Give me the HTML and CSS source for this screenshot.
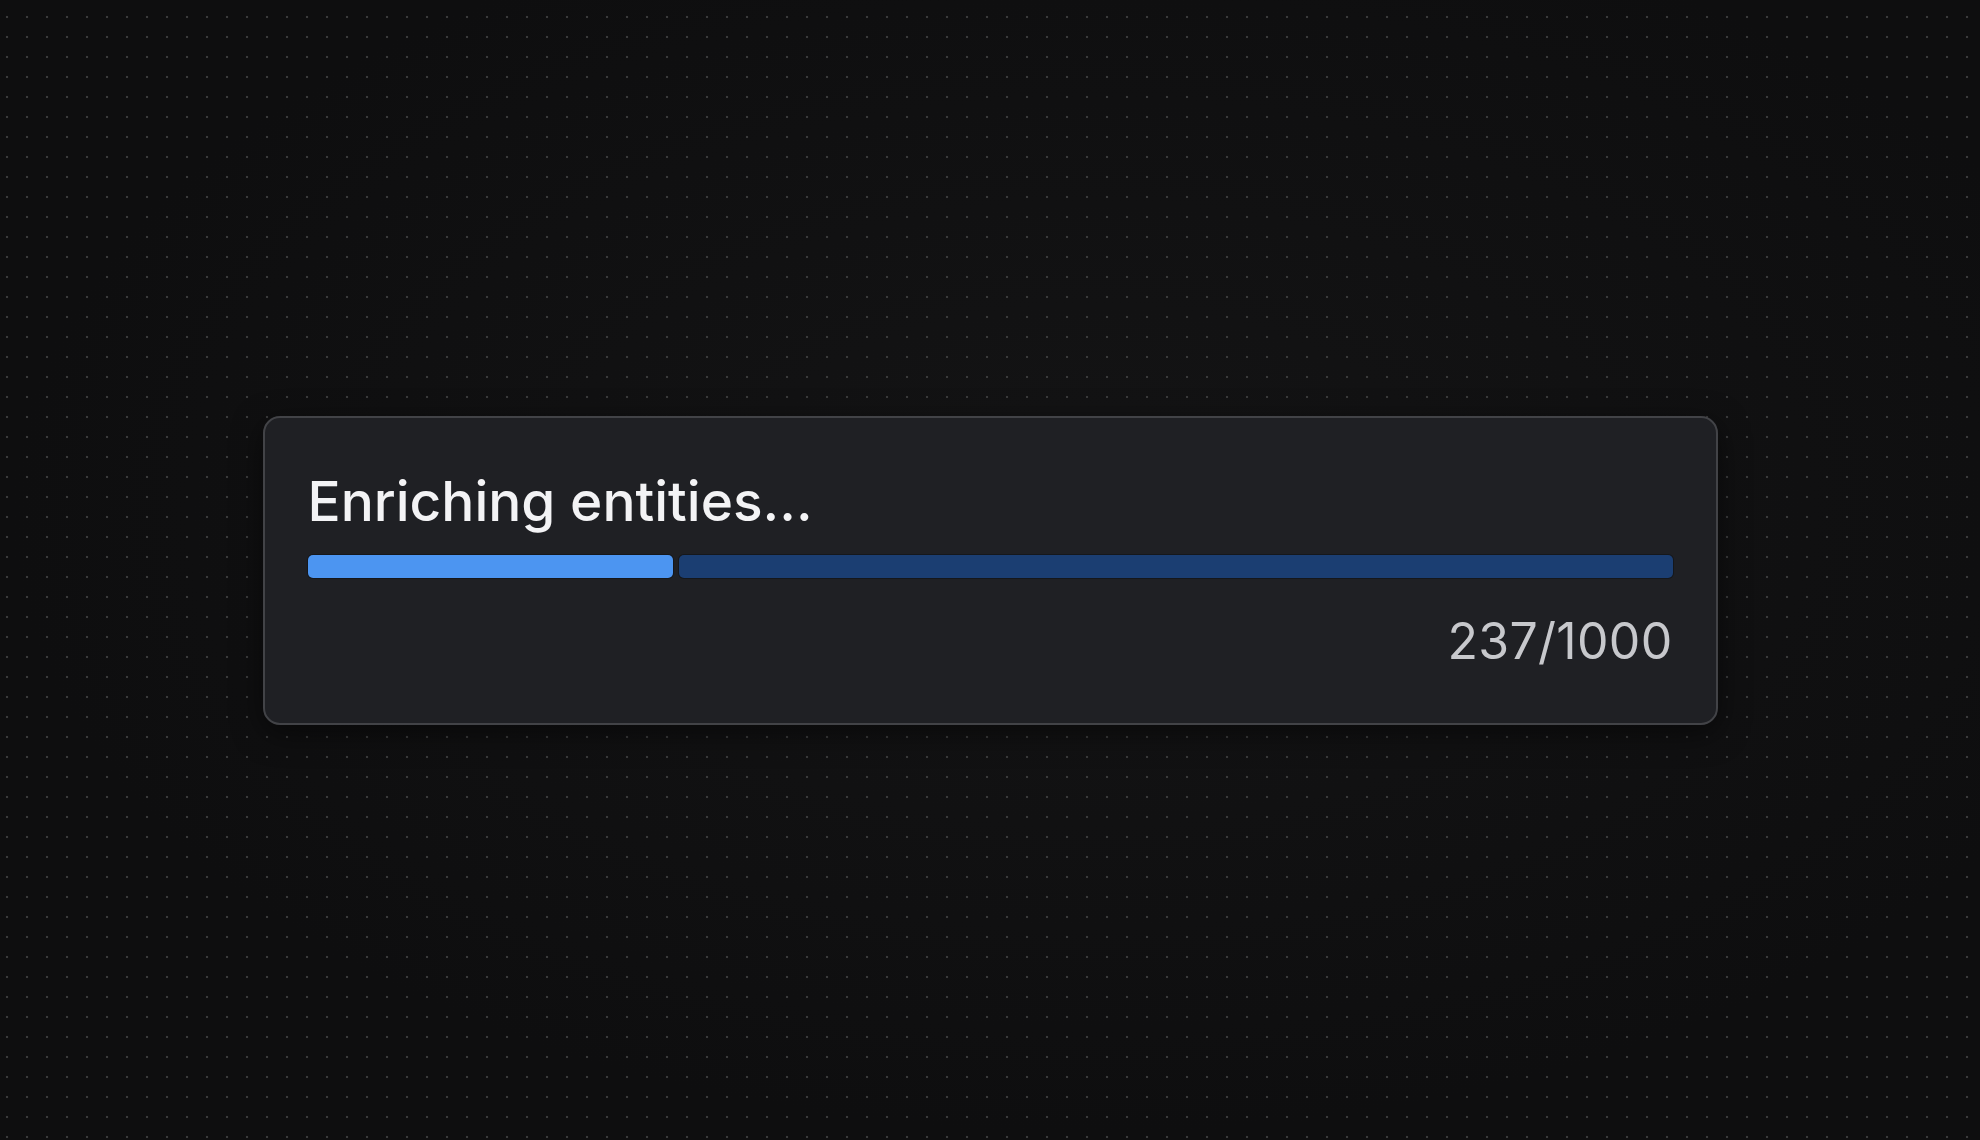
FILE: index.html
```html
<!DOCTYPE html>
<html lang="en">
<head>
<meta charset="utf-8">
<title>Enriching entities</title>
<link rel="stylesheet" href="styles.css">
</head>
<body>
  <main class="stage">
    <section class="progress-card">
      <h1 class="progress-title">Enriching entities...</h1>
      <div class="progress-track">
        <div class="progress-fill" style="width: 365px"></div>
        <div class="progress-rest"></div>
      </div>
      <div class="progress-count">237/1000</div>
    </section>
  </main>
</body>
</html>
```
FILE: styles.css
```css
html, body {
  margin: 0;
  padding: 0;
  height: 100%;
}

body {
  background-color: #0f0f10;
  background-image:
    radial-gradient(circle at center, #3a3a3b 0.9px, transparent 1.6px),
    radial-gradient(ellipse at 55% 45%, #141415 0%, #0e0e0f 70%);
  background-size: 20px 20px, 100% 100%;
  background-position: -3px 7px, 0 0;
  font-family: Inter, Roboto, "Liberation Sans", sans-serif;
}

.stage {
  height: 100vh;
  display: flex;
  align-items: center;
  justify-content: center;
}

.progress-card {
  box-sizing: border-box;
  width: 1455px;
  height: 309px;
  padding: 50px 43px 0 43px;
  background: #1f2024;
  border: 2px solid #424347;
  border-radius: 17px;
  box-shadow: 0 8px 30px rgba(0, 0, 0, 0.5);
  display: flex;
  flex-direction: column;
}

.progress-title {
  margin: 0;
  font-size: 55px;
  font-weight: 500;
  line-height: 66px;
  color: #f3f3f5;
  letter-spacing: 0;
}

.progress-track {
  margin-top: 21px;
  height: 23px;
  display: flex;
  gap: 6px;
}

.progress-fill {
  flex: none;
  background: #4c95f1;
  border-radius: 5px;
  box-shadow: 0 0 0 1px #15171b;
}

.progress-rest {
  flex: 1;
  background: #1b3e72;
  border-radius: 5px;
  box-shadow: 0 0 0 1px #15171b;
}

.progress-count {
  margin-top: 33px;
  align-self: flex-end;
  font-size: 50px;
  line-height: 60px;
  letter-spacing: 0.3px;
  color: #c7c8cc;
}
```
